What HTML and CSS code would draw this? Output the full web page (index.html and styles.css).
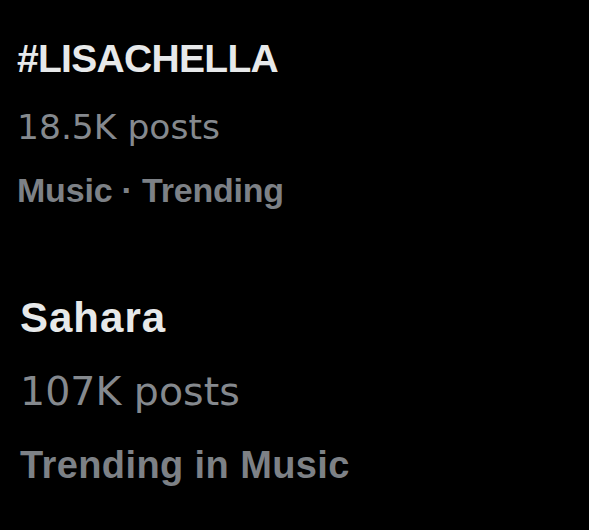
FILE: index.html
```html
<!DOCTYPE html>
<html>
<head>
<meta charset="utf-8">
<link rel="stylesheet" href="styles.css">
</head>
<body>
<main class="list">
  <section class="trend trend-first">
    <div class="trend-title">#LISACHELLA</div>
    <div class="trend-count">18.5K posts</div>
    <div class="trend-meta">Music · Trending</div>
  </section>
  <section class="trend trend-second">
    <div class="trend-title">Sahara</div>
    <div class="trend-count">107K posts</div>
    <div class="trend-meta">Trending in Music</div>
  </section>
</main>
</body>
</html>
```
FILE: styles.css
```css
html, body {
  margin: 0;
  padding: 0;
  background: #000;
}
body {
  width: 589px;
  height: 530px;
  overflow: hidden;
  font-family: "Liberation Sans", Arial, sans-serif;
}
.list {
  display: flex;
  flex-direction: column;
  padding-top: 35px;
}
.trend {
  display: flex;
  flex-direction: column;
}
.trend-title {
  color: #e7e9ea;
  font-weight: bold;
  line-height: 48px;
}
.trend-count {
  color: #85898e;
  font-family: "DejaVu Sans", "Liberation Sans", sans-serif;
  font-weight: 400;
  line-height: 48px;
}
.trend-meta {
  color: #7d8186;
  font-weight: bold;
  line-height: 48px;
}
.trend-first {
  padding-left: 17px;
}
.trend-first .trend-title { font-size: 39px; letter-spacing: -0.7px; }
.trend-first .trend-count { font-size: 34.5px; margin-top: 20px; }
.trend-first .trend-meta { font-size: 34px; letter-spacing: -0.2px; margin-top: 15px; }

.trend-second {
  padding-left: 20px;
  margin-top: 80px;
}
.trend-second .trend-title { font-size: 42px; letter-spacing: 1px; }
.trend-second .trend-count { font-size: 39.5px; margin-top: 25px; }
.trend-second .trend-meta { font-size: 38px; letter-spacing: 0.4px; margin-top: 26px; }
```
